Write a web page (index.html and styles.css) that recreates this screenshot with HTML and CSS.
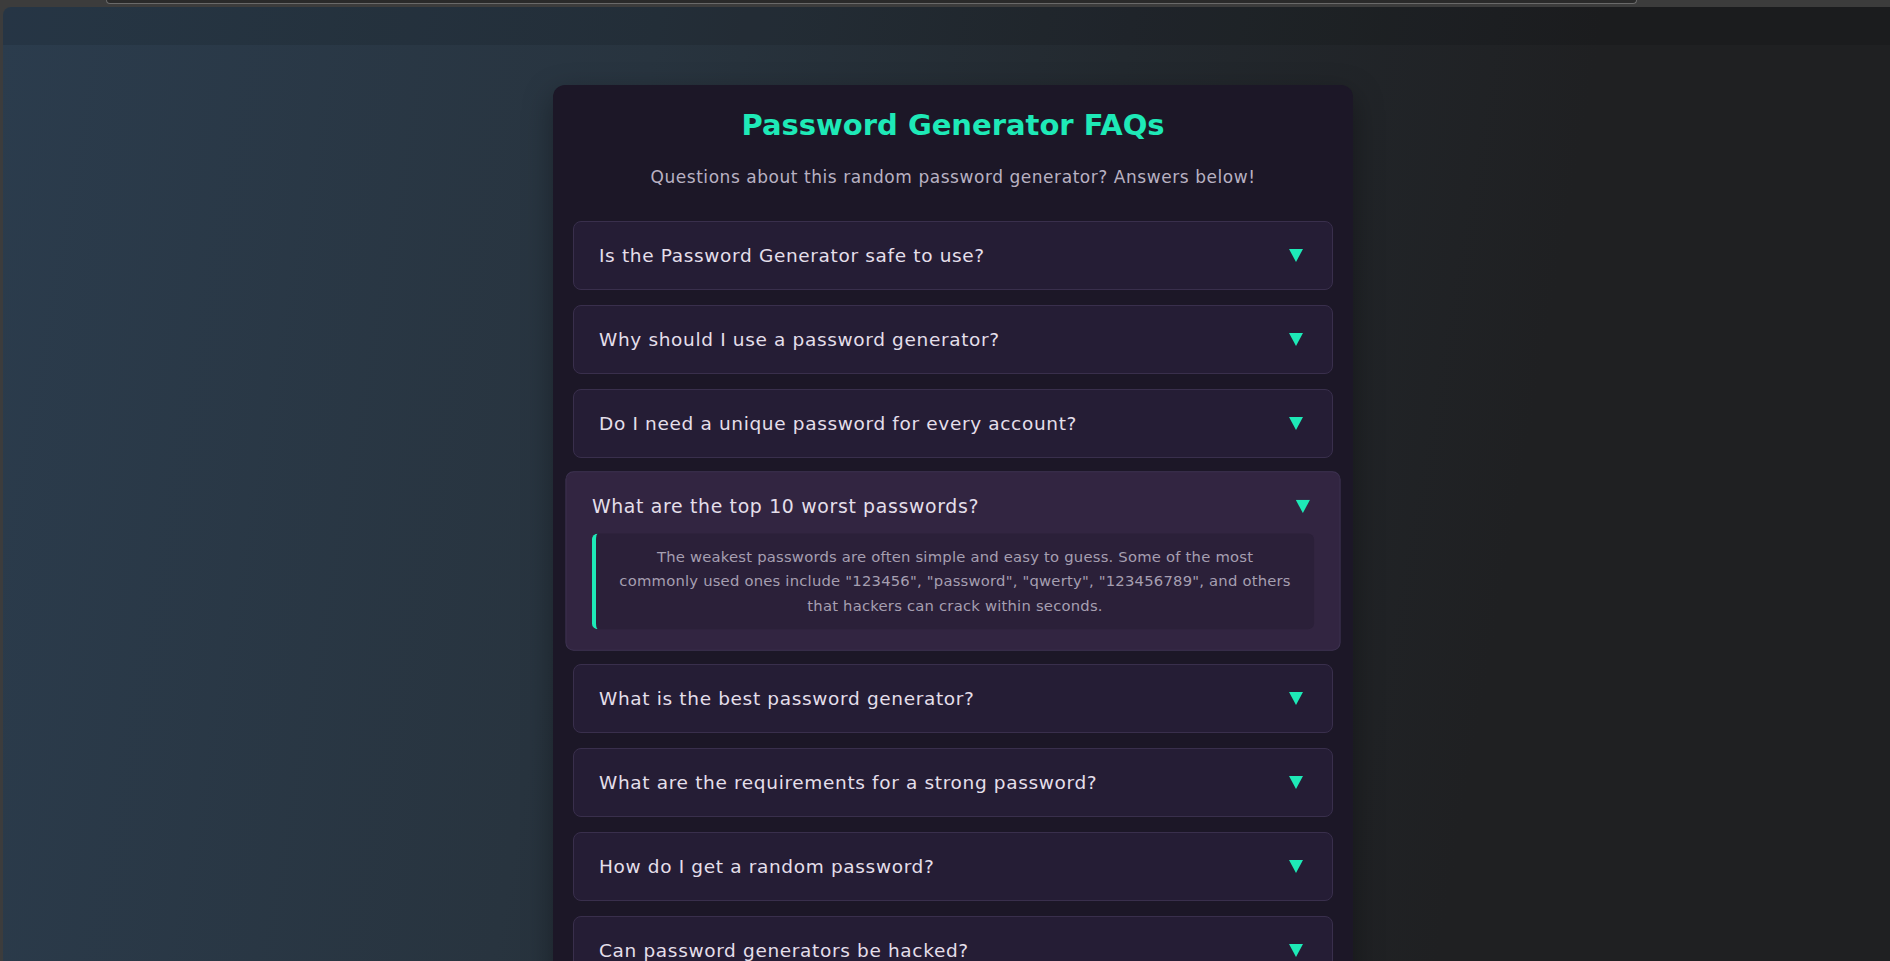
FILE: index.html
```html
<!DOCTYPE html>
<html lang="en">
<head>
<meta charset="utf-8">
<title>Password Generator FAQs</title>
<link rel="stylesheet" href="styles.css">
</head>
<body>
<div class="chrome"><div class="urlbar"></div></div>
<div class="viewport">
  <div class="topband"></div>
  <main class="main">
    <section class="card">
      <h1 class="title">Password Generator FAQs</h1>
      <p class="subtitle">Questions about this random password generator? Answers below!</p>
      <div class="faq-list">
        <div class="faq">
          <div class="q"><span>Is the Password Generator safe to use?</span><svg class="arrow" viewBox="0 0 14 13"><path d="M0 0H14L7 13Z"/></svg></div>
        </div>
        <div class="faq">
          <div class="q"><span>Why should I use a password generator?</span><svg class="arrow" viewBox="0 0 14 13"><path d="M0 0H14L7 13Z"/></svg></div>
        </div>
        <div class="faq">
          <div class="q"><span>Do I need a unique password for every account?</span><svg class="arrow" viewBox="0 0 14 13"><path d="M0 0H14L7 13Z"/></svg></div>
        </div>
        <div class="faq active">
          <div class="q"><span>What are the top 10 worst passwords?</span><svg class="arrow" viewBox="0 0 14 13"><path d="M0 0H14L7 13Z"/></svg></div>
          <div class="answer">The weakest passwords are often simple and easy to guess. Some of the most<br>commonly used ones include "123456", "password", "qwerty", "123456789", and others<br>that hackers can crack within seconds.</div>
        </div>
        <div class="faq">
          <div class="q"><span>What is the best password generator?</span><svg class="arrow" viewBox="0 0 14 13"><path d="M0 0H14L7 13Z"/></svg></div>
        </div>
        <div class="faq">
          <div class="q"><span>What are the requirements for a strong password?</span><svg class="arrow" viewBox="0 0 14 13"><path d="M0 0H14L7 13Z"/></svg></div>
        </div>
        <div class="faq">
          <div class="q"><span>How do I get a random password?</span><svg class="arrow" viewBox="0 0 14 13"><path d="M0 0H14L7 13Z"/></svg></div>
        </div>
        <div class="faq">
          <div class="q"><span>Can password generators be hacked?</span><svg class="arrow" viewBox="0 0 14 13"><path d="M0 0H14L7 13Z"/></svg></div>
        </div>
      </div>
    </section>
  </main>
</div>
</body>
</html>
```
FILE: styles.css
```css
* { box-sizing: border-box; }
html, body { height: 100%; }
body {
  margin: 0;
  background: #3c3c3c;
  font-family: "DejaVu Sans", Inter, sans-serif;
  display: flex;
  flex-direction: column;
  overflow: hidden;
}
.chrome {
  height: 7px;
  flex: none;
}
.urlbar {
  margin-left: 106px;
  width: 1531px;
  height: 4px;
  background: #2a2a2a;
  border: 1px solid #6a6a6a;
  border-top: none;
  border-radius: 0 0 6px 6px;
}
.viewport {
  flex: 1;
  margin-left: 3px;
  border-top-left-radius: 8px;
  overflow: hidden;
  background: linear-gradient(100deg, #2b3c4d 0%, #28343f 32%, #23292f 55%, #1f2022 78%);
}
.topband {
  height: 38px;
  background: rgba(0, 0, 0, 0.1);
}
.main {
  padding: 40px 0 0 13px;
}
.card {
  width: 800px;
  margin: 0 auto;
  background: #1c1727;
  border-radius: 12px;
  padding: 20px 20px 40px;
  box-shadow: 0 10px 30px rgba(0, 0, 0, 0.35);
}
.title {
  margin: 0;
  text-align: center;
  font-size: 29px;
  line-height: 40px;
  font-weight: 700;
  color: #1ee9b7;
}
.subtitle {
  margin: 20px 0 32px;
  text-align: center;
  font-size: 17px;
  letter-spacing: 0.55px;
  line-height: 24px;
  color: #b8b1c2;
}
.faq-list {
  display: flex;
  flex-direction: column;
  gap: 15px;
}
.faq {
  background: #251d35;
  border: 1px solid #392f4c;
  border-radius: 8px;
  padding: 20px 25px;
}
.q {
  display: flex;
  align-items: center;
  justify-content: space-between;
  font-size: 18.5px;
  letter-spacing: 0.65px;
  line-height: 27px;
  color: #e4dfea;
}
.arrow {
  width: 14px;
  height: 13px;
  fill: #1ee9b7;
  margin-right: 4px;
}
.faq.active {
  background: #322541;
  border-color: #3e3352;
  transform: scale(1.02);
}
.answer {
  margin-top: 13px;
  background: #2b2039;
  border-left: 4px solid #1ee9b7;
  border-radius: 6px;
  padding: 11px 20px;
  text-align: center;
  font-size: 14.5px;
  letter-spacing: 0.2px;
  line-height: 24px;
  color: #a69fb1;
}
```
